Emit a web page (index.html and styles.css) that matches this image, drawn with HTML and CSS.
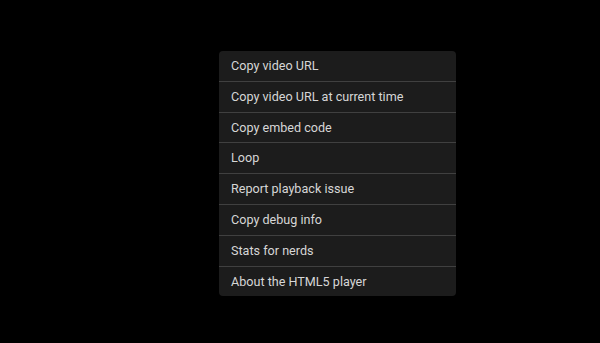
FILE: index.html
```html
<!DOCTYPE html>
<html>
<head>
<meta charset="utf-8">
<link rel="stylesheet" href="styles.css">
</head>
<body>
<div class="stage">
  <ul class="menu">
    <li class="item">Copy video URL</li>
    <li class="item">Copy video URL at current time</li>
    <li class="item">Copy embed code</li>
    <li class="item">Loop</li>
    <li class="item">Report playback issue</li>
    <li class="item">Copy debug info</li>
    <li class="item">Stats for nerds</li>
    <li class="item">About the HTML5 player</li>
  </ul>
</div>
</body>
</html>
```
FILE: styles.css
```css
html, body {
  margin: 0;
  padding: 0;
  background: #000;
  width: 600px;
  height: 343px;
  overflow: hidden;
}
.stage {
  padding: 51px 0 0 219px;
}
.menu {
  list-style: none;
  margin: 0;
  padding: 0;
  width: 237px;
  background: #1c1c1c;
  border-radius: 4px;
  overflow: hidden;
  font-family: Roboto, "Liberation Sans", sans-serif;
  font-size: 12.6px;
  color: #d6d6d6;
}
.item {
  height: 29.8px;
  line-height: 29px;
  padding-left: 12px;
  white-space: nowrap;
}
.item + .item {
  border-top: 1px solid #404040;
}
```
